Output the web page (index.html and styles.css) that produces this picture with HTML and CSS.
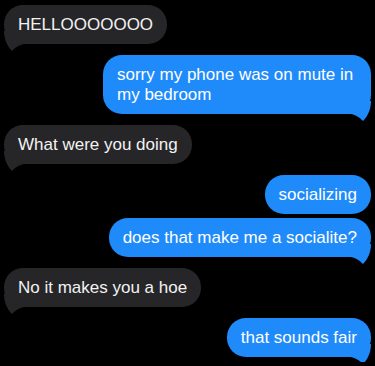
FILE: index.html
```html
<!DOCTYPE html>
<html lang="en">
<head>
    <meta charset="UTF-8">
    <meta name="viewport" content="width=device-width, initial-scale=1.0">
    <title>Messages</title>
    <link rel="stylesheet" href="styles.css">
</head>
<body>
    <div class="thread">
        <div class="msg in">HELLOOOOOOO
            <svg class="tail" viewBox="0 0 20 20"><path d="M0 0 C0 8 3 15 8 20 C11 17 14 14.5 20 13 L20 0 Z"/></svg>
        </div>

        <div class="msg out">sorry my phone was on mute in my bedroom
            <svg class="tail" viewBox="0 0 20 20"><path d="M20 0 C20 8 17 15 12 20 C9 17 6 14.5 0 13 L0 0 Z"/></svg>
        </div>

        <div class="msg in">What were you doing
            <svg class="tail" viewBox="0 0 20 20"><path d="M0 0 C0 8 3 15 8 20 C11 17 14 14.5 20 13 L20 0 Z"/></svg>
        </div>

        <div class="msg out">socializing</div>
        <div class="msg out">does that make me a socialite?
            <svg class="tail" viewBox="0 0 20 20"><path d="M20 0 C20 8 17 15 12 20 C9 17 6 14.5 0 13 L0 0 Z"/></svg>
        </div>

        <div class="msg in">No it makes you a hoe
            <svg class="tail" viewBox="0 0 20 20"><path d="M0 0 C0 8 3 15 8 20 C11 17 14 14.5 20 13 L20 0 Z"/></svg>
        </div>

        <div class="msg out">that sounds fair
            <svg class="tail" viewBox="0 0 20 20"><path d="M20 0 C20 8 17 15 12 20 C9 17 6 14.5 0 13 L0 0 Z"/></svg>
        </div>
    </div>
</body>
</html>
```

FILE: styles.css
```css
body {
    margin: 0;
    background-color: #000;
    font-family: "Liberation Sans", Arial, sans-serif;
}

.thread {
    display: flex;
    flex-direction: column;
    align-items: flex-start;
    padding: 5px 4px;
}

.msg {
    position: relative;
    box-sizing: border-box;
    max-width: 268px;
    margin-top: 11px;
    padding: 9.5px 14px;
    border-radius: 19px;
    font-size: 17px;
    line-height: 20px;
    color: #fff;
}

.msg:first-child {
    margin-top: 0;
}

.msg.in {
    align-self: flex-start;
    background-color: #262629;
    color: #f2f2f2;
}

.msg.out {
    align-self: flex-end;
    background-color: #1f8bfa;
}

.msg.out + .msg.out {
    margin-top: 4px;
}

.tail {
    position: absolute;
    bottom: -7px;
    width: 20px;
    height: 20px;
}

.in .tail {
    left: 0;
    fill: #262629;
}

.out .tail {
    right: 0;
    fill: #1f8bfa;
}
```
